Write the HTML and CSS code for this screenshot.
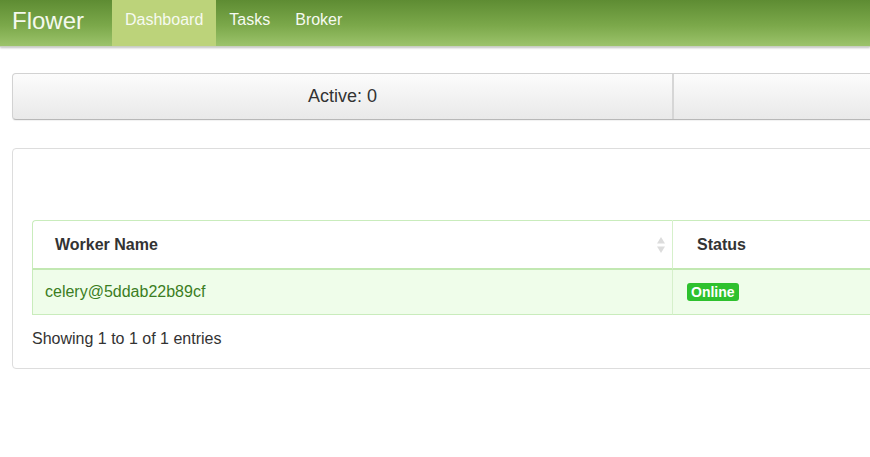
FILE: index.html
```html
<!DOCTYPE html>
<html>
<head>
<meta charset="utf-8">
<link rel="stylesheet" href="styles.css">
</head>
<body>
<nav class="navbar">
  <span class="brand">Flower</span>
  <a class="nav-link active">Dashboard</a>
  <a class="nav-link">Tasks</a>
  <a class="nav-link">Broker</a>
</nav>
<main class="page">
  <div class="stats">
    <div class="stat">Active: 0</div>
    <div class="stat"></div>
  </div>
  <section class="panel">
    <table class="workers">
      <thead>
        <tr>
          <th class="col-name">Worker Name
            <span class="sort"><svg width="10" height="18" viewBox="0 0 10 18"><path d="M5 1 L9 7.5 H1 Z" fill="#dcdcdc"/><path d="M5 17 L9 10.5 H1 Z" fill="#dcdcdc"/></svg></span>
          </th>
          <th class="col-status">Status</th>
        </tr>
      </thead>
      <tbody>
        <tr>
          <td class="col-name worker">celery@5ddab22b89cf</td>
          <td class="col-status"><span class="badge">Online</span></td>
        </tr>
      </tbody>
    </table>
    <div class="info">Showing 1 to 1 of 1 entries</div>
  </section>
</main>
</body>
</html>
```
FILE: styles.css
```css
html, body {
  margin: 0;
  padding: 0;
  overflow: hidden;
  background: #fff;
}
body {
  font-family: "Liberation Sans", Arial, sans-serif;
  font-size: 16px;
  color: #333;
  width: 870px;
  height: 457px;
}
.navbar {
  display: flex;
  align-items: stretch;
  height: 46px;
  background: linear-gradient(to bottom, #5e8c33 0%, #7ba84a 55%, #9cc36b 100%);
  box-shadow: 0 1px 2px rgba(0,0,0,0.25);
  border-bottom: 1px solid #c9cfc2;
  padding-left: 12px;
}
.brand {
  color: #f4f9ee;
  font-size: 24px;
  line-height: 42px;
  margin-right: 28px;
}
.nav-link {
  color: #f6faf1;
  font-size: 16px;
  line-height: 40px;
  padding: 0 12px 0 13px;
}
.nav-link.active {
  background: #bcd37a;
  padding: 0 13px 0 13px;
}
.page {
  width: 1400px;
  padding: 26px 12px 0 12px;
}
.stats {
  display: flex;
  height: 45px;
  border: 1px solid #d2d2d2;
  border-bottom-color: #b8b8b8;
  border-radius: 4px;
  background: linear-gradient(to bottom, #fcfcfc 0%, #e9e9e9 100%);
  box-shadow: 0 1px 1px rgba(0,0,0,0.06);
  width: 1200px;
}
.stat {
  width: 659px;
  flex: none;
  text-align: center;
  line-height: 45px;
  font-size: 18px;
  color: #333;
  border-right: 2px solid #d6d6d6;
}
.panel {
  margin-top: 28px;
  border: 1px solid #dddddd;
  border-radius: 4px;
  width: 1200px;
  height: 221px;
  padding: 71px 0 0 19px;
  box-sizing: border-box;
}
.workers {
  border-collapse: separate;
  border-spacing: 0;
  width: 1100px;
}
.workers th,
.workers td {
  box-sizing: border-box;
}
.workers th {
  text-align: left;
  font-weight: bold;
  height: 50px;
  padding: 0;
  border-top: 1px solid #c9ecbc;
  border-bottom: 2px solid #c2e8b2;
  color: #333;
  position: relative;
}
.workers th.col-name {
  width: 641px;
  padding-left: 22px;
  border-left: 1px solid #c9ecbc;
  border-right: 1px solid #d6f0cb;
  border-top-left-radius: 4px;
}
.workers th.col-status {
  padding-left: 24px;
}
.sort {
  position: absolute;
  right: 6px;
  top: 15px;
  line-height: 0;
}
.workers td {
  height: 45px;
  padding: 0;
  background: #effdea;
  border-bottom: 1px solid #c9ecbc;
}
.workers td.col-name {
  padding-left: 12px;
  border-left: 1px solid #c9ecbc;
  border-right: 1px solid #d6f0cb;
}
.workers td.col-status {
  padding-left: 14px;
}
.worker {
  color: #3b7d23;
}
.badge {
  display: inline-block;
  background: #2ec12e;
  color: #fff;
  font-weight: bold;
  font-size: 14px;
  line-height: 16px;
  padding: 1px 4px 1px 4px;
  border-radius: 3px;
}
.info {
  margin-top: 15px;
  color: #333;
}
```
